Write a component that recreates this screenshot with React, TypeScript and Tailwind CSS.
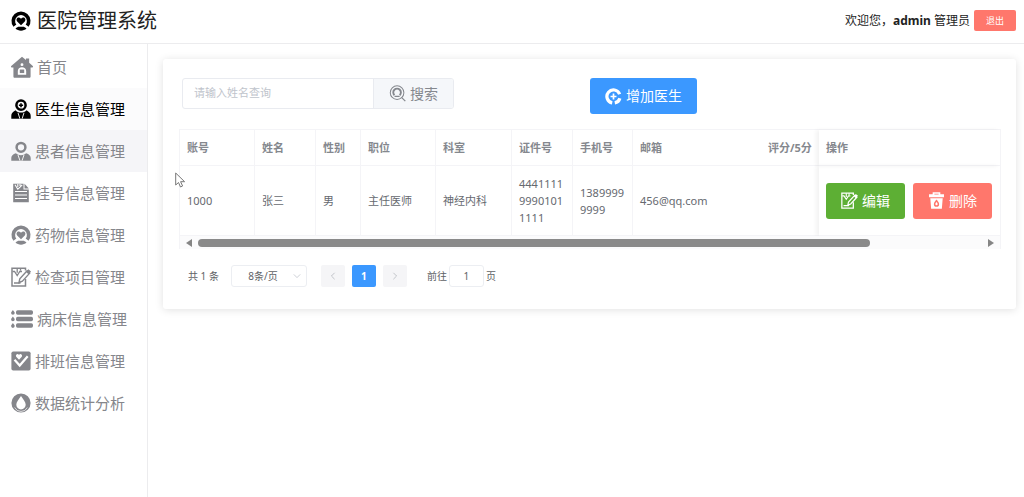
import { useState, type ReactNode } from 'react';
import clsx from 'clsx';

type IconProps = { className?: string };

function Svg({ className = 'h-5 w-5', children }: IconProps & { children: ReactNode }) {
  return (
    <svg viewBox="0 0 20 20" className={clsx('shrink-0', className)} fill="currentColor" aria-hidden="true">
      {children}
    </svg>
  );
}

const HeartRingIcon = ({ className }: IconProps) => (
  <Svg className={className}>
    <path d="M3.9 14.7A7.7 7.7 0 1 1 16.1 14.7" fill="none" stroke="currentColor" strokeWidth="3.6" />
    <path d="M10 14.2 6.2 10.4C4.7 8.6 6.1 6.4 8 6.6c.9.1 1.6.5 2 1.2.4-.7 1.1-1.1 2-1.2 1.9-.2 3.3 2 1.8 3.8z" />
    <path d="M4.5 17.6c1.2-1.3 2.7-1.9 3.3-1.9h4.4c.6 0 2.1.6 3.3 1.9-1.4 1.3-3.4 2.1-5.5 2.1s-4.1-.8-5.5-2.1z" />
  </Svg>
);

const HouseIcon = ({ className }: IconProps) => (
  <Svg className={className}>
    <path
      fillRule="evenodd"
      d="M10 .6 13.6 3.7V2.2h2.9v4l3.300 3c.5.5.2 1.200-.4 1.200h-1.600v8.200c0 .7-.4 1.100-1.100 1.100H3.300c-.7 0-1.100-.4-1.100-1.100v-8.200H.6c-.6 0-.9-.7-.4-1.200zM10 6.600a1.300 1.300 0 1 0 0 2.600A1.300 1.300 0 0 0 10 6.600zM10 10.200c-2.200 0-3.800 1.500-3.800 3.500v3.400h7.600v-3.400c0-2-1.600-3.500-3.800-3.500z"
    />
    <path d="M8 12.300h4v3.200H8z" />
  </Svg>
);

const DoctorIcon = ({ className }: IconProps) => (
  <Svg className={className}>
    <circle cx="10" cy="6.200" r="4.600" fill="none" stroke="currentColor" strokeWidth="2.500" />
    <path d="M9.200 4.300h1.600v1.200h1.300v1.500h-1.300v1.200H9.200V7H7.900V5.500h1.300z" />
    <path d="M4.500 11.300c1.200 1.400 3.200 2.300 5.500 2.300s4.300-.9 5.500-2.300c2.700 1.400 4.200 3.200 4.200 5.400v3H.3v-3c0-2.200 1.500-4 4.200-5.400z" />
    <path d="m7 13.800 1.900 5.900M13 13.800l-1.900 5.900" stroke="white" strokeWidth=".9" />
  </Svg>
);

const PatientIcon = ({ className }: IconProps) => (
  <Svg className={className}>
    <circle cx="10" cy="6.300" r="4.400" fill="none" stroke="currentColor" strokeWidth="2.500" />
    <path d="M4.900 12.300c1.200 1.200 3 1.900 5.100 1.900s3.900-.7 5.100-1.900c3 1 4.600 2.500 4.600 4.600v2.800H.3v-2.800c0-2.100 1.600-3.600 4.600-4.600z" />
    <path d="m7 14 2 5.700M13 14l-2 5.700" stroke="white" strokeWidth=".9" />
  </Svg>
);

const RegisterIcon = ({ className }: IconProps) => (
  <Svg className={className}>
    <path d="M2.200.8h10.300v5.700h5.300v12.700H2.200z" />
    <path d="M13.5.8 17.800 5.500h-4.300z" />
    <path d="m4 1.800 2.800 4.400L9 4.200l2.200-2.400M6.800 1v3M9 1v2" fill="none" stroke="white" strokeWidth="1.1" />
    <path d="M4 8.500h12M4 12h12M4 15.500h12" stroke="white" strokeWidth="1.2" />
  </Svg>
);

const EditIcon = ({ className }: IconProps) => (
  <Svg className={className}>
    <path d="M14.500 12v7H1V1.300h13.500v2.200" fill="none" stroke="currentColor" strokeWidth="1.500" />
    <path d="M1.500 4.500h2l2.700 4 2.600-4H11M6.200 1.500v4.300M9.500 1.500v2" fill="none" stroke="currentColor" strokeWidth="1.300" />
    <path d="m8 15.500.8-3.700 7.300-8 2.600 2.300-7.300 8z" fill="none" stroke="currentColor" strokeWidth="1.400" />
    <path d="m15 5 2.500 2.300L20 4.500l-2.600-2.200zM3 15.200h6.500v1.600H3z" />
  </Svg>
);

const BedIcon = ({ className }: IconProps) => (
  <svg viewBox="0 0 22 20" className={clsx('shrink-0', className)} fill="currentColor" aria-hidden="true">
    <rect x="5" y="1.200" width="17" height="4.600" rx="1.700" />
    <rect x="5" y="7.700" width="17" height="4.600" rx="1.700" />
    <rect x="5" y="14.200" width="17" height="4.600" rx="1.700" />
    <path d="M1.900.9c1 1.300 1.800 2.100 1.800 3a1.800 1.800 0 0 1-3.600 0c0-.9.8-1.700 1.800-3zM1.900 7.500c1 1.300 1.800 2.100 1.800 3a1.800 1.800 0 0 1-3.600 0c0-.9.8-1.700 1.800-3zM1.900 14.100c1 1.300 1.800 2.100 1.800 3a1.800 1.800 0 0 1-3.600 0c0-.9.8-1.700 1.800-3z" />
  </svg>
);

const ScheduleIcon = ({ className }: IconProps) => (
  <Svg className={className}>
    <rect x=".4" y=".4" width="19.2" height="19.2" rx="1.8" />
    <path d="m3.500 8.800 5.200 5.700 8-9.300" fill="none" stroke="white" strokeWidth="2.200" />
    <path d="M8 8.800 5.200 5.800C4 4 6.700 1.900 8 3.900c1.300-2 4 .1 2.800 1.900z" fill="white" />
  </Svg>
);

const StatsIcon = ({ className }: IconProps) => (
  <Svg className={className}>
    <path
      fillRule="evenodd"
      d="M10 .4a9.600 9.600 0 1 1 0 19.200A9.600 9.600 0 0 1 10 .4zM10 2.900C7.600 6.200 5.300 9 5.300 11.800a4.700 4.700 0 0 0 9.400 0C14.700 9 12.400 6.200 10 2.900z"
    />
    <path d="M3.700 14.500a7 7 0 0 0 12.600 0" fill="none" stroke="white" strokeWidth=".7" />
  </Svg>
);

const SearchIcon = ({ className }: IconProps) => (
  <Svg className={className}>
    <circle cx="9.500" cy="9" r="8" fill="none" stroke="currentColor" strokeWidth="1.200" />
    <path d="M6.400 12a4.500 4.500 0 1 1 6.200 0" fill="none" stroke="currentColor" strokeWidth="2.200" />
    <path d="M6.500 13.500h6M15 14.800l4.200 4.200" stroke="currentColor" strokeWidth="1.500" />
  </Svg>
);

const AddIcon = ({ className }: IconProps) => (
  <Svg className={className}>
    <path d="M17.200 7.300A7.700 7.700 0 1 0 8.500 17.500M11.500 17.500A7.700 7.700 0 0 0 17.500 12" fill="none" stroke="currentColor" strokeWidth="3.800" />
    <path d="M9 6.500h2V9h2.500v2H11v2.500H9V11H6.500V9H9z" />
  </Svg>
);

const TrashIcon = ({ className }: IconProps) => (
  <Svg className={className}>
    <path fillRule="evenodd" d="M5.500 2.700V.4h9v2.300h4.300v3.400H1.200V2.700zM7.500 2v.9h5V2z" />
    <path
      fillRule="evenodd"
      d="M2.700 7.300h14.600l-1 12.400H3.700zM10 8.800c-1.800 2.200-3.100 3.700-3.100 5.500a3.100 3.100 0 0 0 6.200 0c0-1.800-1.300-3.300-3.100-5.500z"
    />
    <path d="M10 11.900c-.7 1-1.300 1.600-1.300 2.400a1.300 1.300 0 0 0 2.600 0c0-.8-.6-1.400-1.300-2.400z" />
  </Svg>
);

function Chevron({ d, className }: { d: string; className?: string }) {
  return (
    <svg viewBox="0 0 10 10" className={clsx('h-2 w-2', className)} fill="none" stroke="currentColor" aria-hidden="true">
      <path d={d} />
    </svg>
  );
}

const menu = [
  { label: '首页', Icon: HouseIcon, size: 'h-[22px] w-[22px]' },
  { label: '医生信息管理', Icon: DoctorIcon, tone: 'bg-[#fbfbfc] text-black' },
  { label: '患者信息管理', Icon: PatientIcon, tone: 'bg-[#f5f5f8] text-[#85868b]' },
  { label: '挂号信息管理', Icon: RegisterIcon },
  { label: '药物信息管理', Icon: HeartRingIcon },
  { label: '检查项目管理', Icon: EditIcon },
  { label: '病床信息管理', Icon: BedIcon, size: 'h-5 w-[22px]' },
  { label: '排班信息管理', Icon: ScheduleIcon },
  { label: '数据统计分析', Icon: StatsIcon },
];

const columns = [
  { title: '账号', width: 'w-[75px]' },
  { title: '姓名', width: 'w-[61px]' },
  { title: '性别', width: 'w-[45px]' },
  { title: '职位', width: 'w-[75px]' },
  { title: '科室', width: 'w-[76px]' },
  { title: '证件号', width: 'w-[61px]' },
  { title: '手机号', width: 'w-[60px]' },
  { title: '邮箱', width: '' },
  { title: '评分/5分', width: 'w-[58px]' },
  { title: '操作', width: 'w-[181px]' },
];

const doctors = [
  ['1000', '张三', '男', '主任医师', '神经内科', '444111199901011111', '13899999999', '456@qq.com', ''],
];

function DoctorTable() {
  return (
    <div className="mt-[15px] border-x border-t border-[#f4f4f7]">
      <table className="w-full table-fixed border-separate border-spacing-0 text-left text-[11px] leading-[17px]">
        <colgroup>
          {columns.map((c) => (
            <col key={c.title} className={c.width} />
          ))}
        </colgroup>
        <thead>
          <tr className="text-[#85888e]">
            {columns.map((c, i) => (
              <th
                key={c.title}
                className={clsx(
                  'border-b border-[#f4f4f7] py-[9px] pl-[7px] font-bold whitespace-nowrap',
                  i < 7 && 'border-r',
                  i === 9 && 'shadow-[-3px_0_4px_rgba(0,0,0,0.05)]'
                )}
              >
                {c.title}
              </th>
            ))}
          </tr>
        </thead>
        <tbody>
          {doctors.map((row) => (
            <tr key={row[0]} className="text-[#66696f]">
              {row.map((cell, i) => (
                <td
                  key={i}
                  className={clsx('border-b border-[#f4f4f7] px-[7px] py-[9px] break-all', i < 7 && 'border-r')}
                >
                  {cell}
                </td>
              ))}
              <td className="border-b border-[#f4f4f7] px-[7px] shadow-[-3px_0_4px_rgba(0,0,0,0.05)]">
                <div className="flex gap-2 text-sm text-white">
                  <button className="flex h-9 w-[79px] items-center justify-center gap-1 rounded-[3px] bg-[#5daf34]">
                    <EditIcon className="h-[17px] w-[17px]" />
                    编辑
                  </button>
                  <button className="flex h-9 w-[79px] items-center justify-center gap-1 rounded-[3px] bg-[#ff776c]">
                    <TrashIcon className="h-[17px] w-[17px]" />
                    删除
                  </button>
                </div>
              </td>
            </tr>
          ))}
        </tbody>
      </table>

      <div className="flex h-[13px] items-center bg-[#fbfbfc] px-[6px] text-[#858585]">
        <svg viewBox="0 0 6 8" className="h-2 w-[6px]" fill="currentColor" aria-hidden="true">
          <path d="M6 0v8L0 4z" />
        </svg>
        <div className="ml-[6px] flex-1">
          <div className="h-2 w-[85%] rounded-full bg-[#8a8a8a]" />
        </div>
        <svg viewBox="0 0 6 8" className="h-2 w-[6px]" fill="currentColor" aria-hidden="true">
          <path d="M0 0v8l6-4z" />
        </svg>
      </div>
    </div>
  );
}

function Pagination() {
  return (
    <div className="mt-4 flex items-center pl-[9px] text-[10px] text-[#606266]">
      <span>共 1 条</span>
      <div className="relative ml-3">
        <select
          aria-label="每页条数"
          className="h-[22px] w-[76px] appearance-none rounded-[3px] border border-[#eceef2] bg-white pr-3 text-center [text-align-last:center]"
        >
          <option>8条/页</option>
        </select>
        <Chevron d="M1 3l4 4 4-4" className="pointer-events-none absolute top-[7px] right-[6px] text-[#c0c4cc]" />
      </div>
      <div className="ml-[14px] flex gap-[7px]">
        <button aria-label="上一页" className="grid h-[22px] w-6 place-items-center rounded-xs bg-[#f5f5f7] text-[#b4b7be]">
          <Chevron d="M7 1L3 5l4 4" />
        </button>
        <button className="h-[22px] w-6 rounded-xs bg-[#3b98ff] font-bold text-white">1</button>
        <button aria-label="下一页" className="grid h-[22px] w-6 place-items-center rounded-xs bg-[#f5f5f7] text-[#b4b7be]">
          <Chevron d="M3 1l4 4-4 4" />
        </button>
      </div>
      <label className="ml-5 flex items-center gap-[2px]">
        前往
        <input
          defaultValue="1"
          className="h-[22px] w-[35px] rounded-[3px] border border-[#eceef2] text-center"
        />
        页
      </label>
    </div>
  );
}

export default function App() {
  const [keyword, setKeyword] = useState('');

  return (
    <div className="flex min-h-screen flex-col bg-white font-['Noto_Sans','Noto_Sans_CJK_SC',sans-serif]">
      <header className="flex h-11 items-center justify-between border-b border-[#ececee] pr-2 pb-[2px] pl-[11px]">
        <h1 className="flex items-center gap-[6px] text-xl leading-6 text-[#222]">
          <HeartRingIcon className="h-5 w-5 text-black" />
          医院管理系统
        </h1>
        <div className="flex items-center gap-1 text-xs text-[#222]">
          <span>
            欢迎您，<b>admin</b> 管理员
          </span>
          <button className="h-[21px] w-[42px] rounded-xs bg-[#ff776c] text-[9px] text-white">退出</button>
        </div>
      </header>

      <div className="flex flex-1">
        <nav className="w-[148px] shrink-0 border-r border-[#ececee] pt-[2px]">
          {menu.map(({ label, Icon, tone, size }) => (
            <a
              key={label}
              href="#"
              className={clsx(
                'flex h-[42px] items-center gap-1 pl-[11px] text-[15px] whitespace-nowrap',
                tone ?? 'text-[#85868b]'
              )}
            >
              <Icon className={size} />
              {label}
            </a>
          ))}
        </nav>

        <main className="min-w-0 flex-1 pt-[15px] pr-2 pl-[15px]">
          <section className="relative rounded-[3px] bg-white pt-[19px] pr-[15px] pb-[22px] pl-4 shadow-[0_1px_9px_rgba(0,0,0,0.12)]">
            <div className="grid grid-cols-2 items-start">
              <div className="ml-[3px] flex h-[31px] w-[272px] overflow-hidden rounded-[3px] border border-[#e9ebf0]">
                <input
                  value={keyword}
                  onChange={(e) => setKeyword(e.target.value)}
                  aria-label="姓名"
                  placeholder="请输入姓名查询"
                  className="min-w-0 flex-1 px-[11px] text-[11px] placeholder:text-[#c0c4cc]"
                />
                <button className="flex w-20 items-center justify-center gap-1 border-l border-[#e9ebf0] bg-[#f5f7fa] text-sm text-[#85888e]">
                  <SearchIcon className="h-[17px] w-[17px]" />
                  搜索
                </button>
              </div>
              <button className="flex h-9 w-[107px] items-center justify-center gap-1 rounded-[3px] bg-[#3b98ff] text-sm text-white">
                <AddIcon className="h-[17px] w-[17px]" />
                增加医生
              </button>
            </div>

            <DoctorTable />
            <Pagination />

            <svg viewBox="0 0 11 16" className="pointer-events-none absolute top-[113px] left-3 h-4 w-[11px]" aria-hidden="true">
              <path d="M.7 1v12l2.800-2.500 2 4.500 2.100-1-2-4.300h4z" fill="white" stroke="#777" strokeWidth="1" />
            </svg>
          </section>
        </main>
      </div>
    </div>
  );
}
